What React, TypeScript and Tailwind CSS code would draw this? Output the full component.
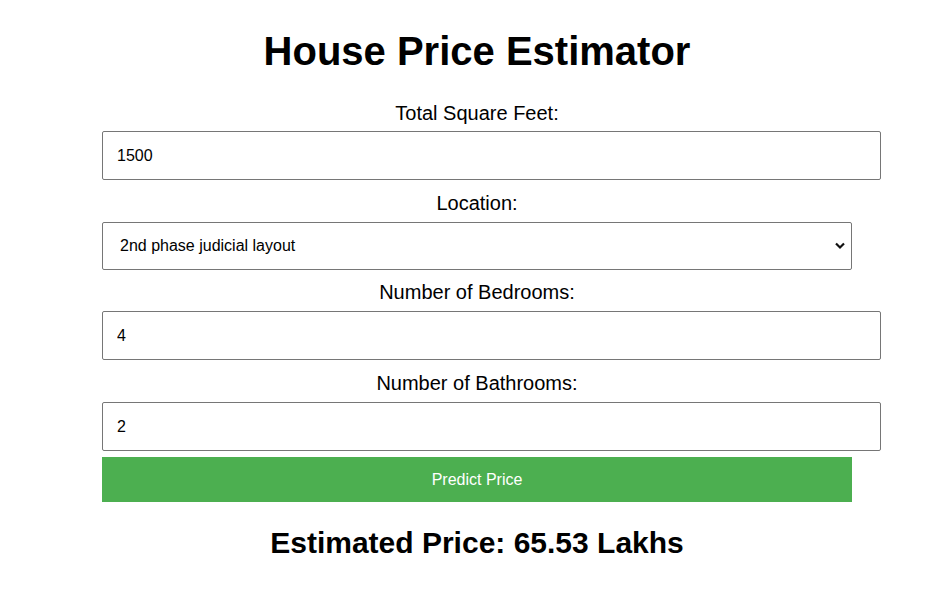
import React, { useState } from 'react';

const labelCls =
  'block text-center text-[20px] leading-[23px] text-black';
const inputCls =
  'block w-[779px] h-[49px] px-[14px] border border-[#767676] rounded-[2px] text-[16px] text-black bg-white outline-none';

export default function App() {
  const [sqft, setSqft] = useState('1500');
  const [location, setLocation] = useState('2nd phase judicial layout');
  const [bedrooms, setBedrooms] = useState('4');
  const [bathrooms, setBathrooms] = useState('2');

  return (
    <div className="min-h-screen w-full bg-white font-['Liberation_Sans',Arial,sans-serif] text-black">
      <div className="ml-[102px] w-[750px] pt-[28px]">
        <h1 className="text-center text-[40px] leading-[46px] font-bold mb-[28px]">
          House Price Estimator
        </h1>

        <label className={labelCls}>Total Square Feet:</label>
        <input
          className={`${inputCls} mt-[6px] mb-[12px]`}
          value={sqft}
          onChange={(e) => setSqft(e.target.value)}
        />

        <label className={labelCls}>Location:</label>
        <div className="relative mt-[7px] mb-[11px] w-[750px]">
          <select
            className="block appearance-none w-[750px] h-[48px] pl-[17px] pr-[30px] border border-[#767676] rounded-[2px] text-[16px] text-black bg-white outline-none"
            value={location}
            onChange={(e) => setLocation(e.target.value)}
          >
            <option>2nd phase judicial layout</option>
            <option>Electronic City</option>
            <option>Whitefield</option>
          </select>
          <svg
            className="pointer-events-none absolute right-[6px] top-[19px]"
            width="12"
            height="9"
            viewBox="0 0 12 9"
          >
            <path d="M2 2.5 L6 6.5 L10 2.5" fill="none" stroke="#111" strokeWidth="2.2" />
          </svg>
        </div>

        <label className={labelCls}>Number of Bedrooms:</label>
        <input
          className={`${inputCls} mt-[7px] mb-[12px]`}
          value={bedrooms}
          onChange={(e) => setBedrooms(e.target.value)}
        />

        <label className={labelCls}>Number of Bathrooms:</label>
        <input
          className={`${inputCls} mt-[7px]`}
          value={bathrooms}
          onChange={(e) => setBathrooms(e.target.value)}
        />

        <button className="block mt-[6px] w-[750px] h-[45px] bg-[#4CAF50] text-white text-[16px] cursor-pointer">
          Predict Price
        </button>

        <h2 className="text-center text-[30px] leading-[34px] font-bold mt-[24px]">
          Estimated Price: 65.53 Lakhs
        </h2>
      </div>
    </div>
  );
}
